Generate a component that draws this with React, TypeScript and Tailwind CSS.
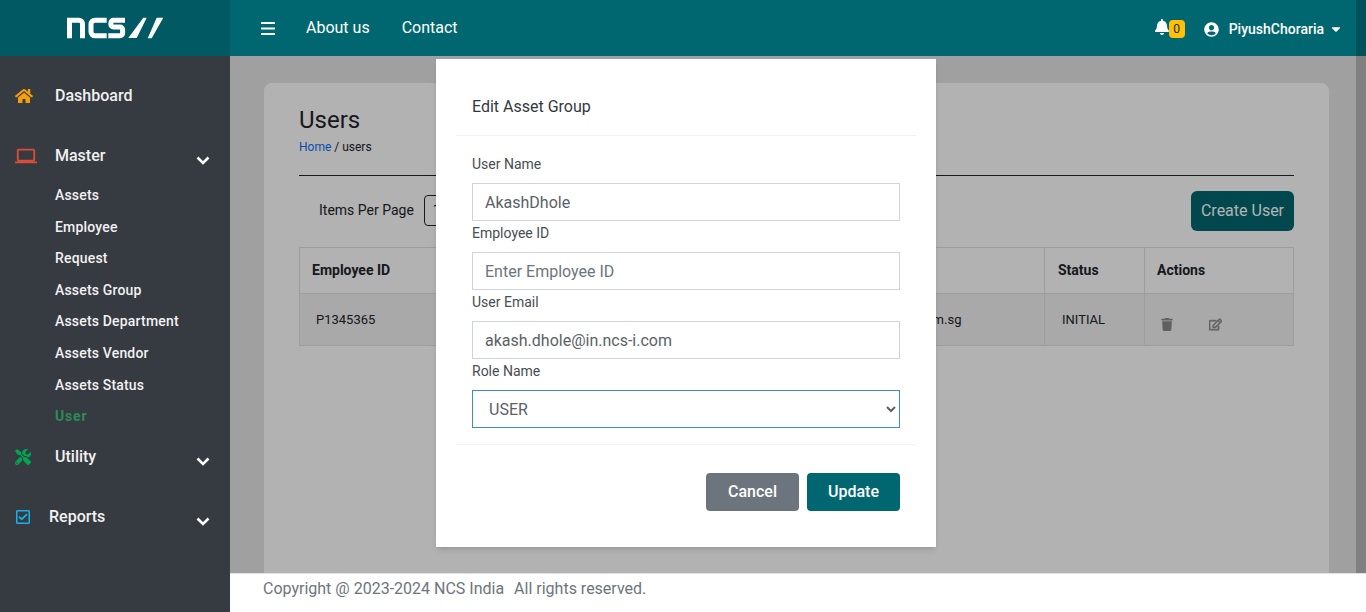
import React from 'react';
import { FaBell, FaCaretDown, FaHome, FaRegCheckSquare, FaRegEdit, FaTools, FaTrash, FaUserCircle } from 'react-icons/fa';
import { MdOutlineLaptop } from 'react-icons/md';

const masterLinks = ['Assets', 'Employee', 'Request', 'Assets Group', 'Assets Department', 'Assets Vendor', 'Assets Status', 'User'];

const Chevron = ({ className = '' }: { className?: string }) => (
  <svg className={className} width="14" height="9" viewBox="0 0 14 9" fill="none" stroke="currentColor" strokeWidth="2.6">
    <path d="M1.5 1.5 7 7l5.5-5.5" />
  </svg>
);

const Logo = () => (
  <svg width="97" height="22" viewBox="0 0 97 22" fill="none" stroke="white" strokeWidth="5">
    <path d="M2.5 21.3V3.2H12a3.5 3.5 0 0 1 3.5 3.5v14.6" />
    <path d="M39.7 3.2H28a4 4 0 0 0-4 4v7.6a4 4 0 0 0 4 4h11.7" />
    <path d="M58 3.2H46.5a2.6 2.6 0 0 0-2.6 2.6v1.6a2.6 2.6 0 0 0 2.6 2.6h6.5a2.6 2.6 0 0 1 2.6 2.6v3.6a2.6 2.6 0 0 1-2.6 2.6H41.3" />
    <path d="M61.3 21h8.4l10-20.3h-3.4zM80.7 21.3h4L96.3.7h-6.6z" fill="white" stroke="none" />
  </svg>
);

const SideItem = ({ icon, label, left = 55, chevron, className = '' }: { icon: React.ReactNode; label: string; left?: number; chevron?: boolean; className?: string }) => (
  <div className={`relative flex h-6 items-center text-base font-medium text-[#f1f1f1] ${className}`}>
    <span className="ml-[15px] flex w-[15px] items-center justify-start">{icon}</span>
    <span className={left === 55 ? 'ml-[25px]' : 'ml-[19px]'}>{label}</span>
    {chevron && <Chevron className="absolute left-[196px] top-[12px] text-white" />}
  </div>
);

const Field = ({ label, value, placeholder }: { label: string; value?: string; placeholder?: string }) => (
  <div>
    <label className="block h-[31px] text-sm leading-6 text-[#484d52]">{label}</label>
    <input
      readOnly
      value={value ?? ''}
      placeholder={placeholder}
      className="block h-[38px] w-full border border-[#ced4da] bg-white px-3 text-base text-[#5a6168] outline-none placeholder:text-[#6c757d]"
    />
  </div>
);

export default function App() {
  return (
    <div className="relative flex h-[612px] flex-col overflow-hidden font-['Roboto',sans-serif]">
      <header className="flex h-14 shrink-0">
        <div className="flex w-[230px] items-center bg-[#005963] pl-[67px]">
          <Logo />
        </div>
        <div className="flex flex-1 items-center bg-[#006670] pl-[31px] pr-[23px] text-white">
          <svg width="14" height="13" viewBox="0 0 14 13" fill="white">
            <path d="M0 0h14v2H0zM0 5.5h14v2H0zM0 11h14v2H0z" />
          </svg>
          <nav className="ml-[31px] flex gap-8 text-base">
            <span>About us</span>
            <span>Contact</span>
          </nav>
          <div className="ml-auto flex items-center pt-[2px]">
            <div className="flex items-center">
              <FaBell className="h-4 w-[14px] shrink-0 -translate-y-[2px]" />
              <span className="flex h-[18px] w-4 items-center justify-center rounded bg-[#ffc107] text-xs text-[#212529]">0</span>
            </div>
            <FaUserCircle className="ml-[19px] h-[15px] w-[15px]" />
            <span className="ml-[10px] text-sm font-medium">PiyushChoraria</span>
            <FaCaretDown className="ml-[5px] h-[14px] w-[14px]" />
          </div>
        </div>
      </header>

      <div className="flex min-h-0 flex-1">
        <aside className="w-[230px] shrink-0 bg-[#363a41] pt-[28px]">
          <SideItem icon={<FaHome className="h-4 w-[18px] shrink-0 text-[#f59e0b]" />} label="Dashboard" />
          <SideItem className="mt-9" icon={<MdOutlineLaptop className="h-[22px] w-[22px] shrink-0 text-[#dd4b39]" />} label="Master" chevron />
          <ul className="mt-[11.2px]">
            {masterLinks.map((link) => (
              <li
                key={link}
                className={`flex h-[31.6px] items-center pl-[55px] text-sm ${link === 'User' ? 'font-bold tracking-[0.8px] text-[#2e8b57]' : 'font-medium tracking-[0.18px] text-[#f1f1f1]'}`}
              >
                {link}
              </li>
            ))}
          </ul>
          <SideItem className="mt-[13px]" icon={<FaTools className="h-4 w-4 shrink-0 text-[#00a651]" />} label="Utility" chevron />
          <SideItem className="mt-9" left={49} icon={<FaRegCheckSquare className="h-4 w-4 shrink-0 text-[#17b3e6]" />} label="Reports" chevron />
        </aside>

        <div className="flex min-w-0 flex-1 flex-col">
          <main className="min-h-0 flex-1 overflow-hidden bg-[#e5e5e5] pl-[34px] pr-[37px] pt-[27px]">
            <section className="h-[520px] rounded-lg bg-white pl-[35px] pr-[35px] pt-[21px]">
              <h1 className="text-2xl text-[#212529]">Users</h1>
              <p className="mt-[2px] text-xs leading-[18px] text-[#212529]">
                <span className="text-[#0d6efd]">Home</span> / users
              </p>
              <hr className="mt-[19px] border-[#212529]" />
              <div className="mt-[15px] flex h-10 items-center justify-between">
                <div className="mb-[2px] flex items-center pl-5 text-sm text-[#212529]">
                  Items Per Page
                  <span className="ml-[10px] flex h-[31px] w-[60px] items-center rounded border border-[#212529] pl-2">10</span>
                </div>
                <button className="h-10 w-[103px] rounded-md bg-[#006670] text-base text-white">Create User</button>
              </div>
              <table className="mt-4 w-full table-fixed border-collapse text-[13px] text-[#212529]">
                <colgroup>
                  <col className="w-[200px]" />
                  <col className="w-[200px]" />
                  <col />
                  <col className="w-[100px]" />
                  <col className="w-[149px]" />
                </colgroup>
                <thead>
                  <tr className="h-[46px] text-left text-sm font-bold">
                    <th className="border border-[#dee2e6] pb-[2px] pl-3">Employee ID</th>
                    <th className="border border-[#dee2e6] pb-[2px] pl-3">User Name</th>
                    <th className="border border-[#dee2e6] pb-[2px] pl-3">User Email</th>
                    <th className="border border-[#dee2e6] pb-[2px] pl-[13px]">Status</th>
                    <th className="border border-[#dee2e6] pb-[2px] pl-3">Actions</th>
                  </tr>
                </thead>
                <tbody>
                  <tr className="h-[52px] bg-[#f2f2f2]">
                    <td className="border border-[#dee2e6] pl-4">P1345365</td>
                    <td className="border border-[#dee2e6] pl-4">AkashDhole</td>
                    <td className="border border-[#dee2e6] pl-[148px]">akash@ncs.com.sg</td>
                    <td className="border border-[#dee2e6] pl-[17px]">INITIAL</td>
                    <td className="border border-[#dee2e6] pl-4">
                      <div className="flex translate-y-[5px] items-center gap-9 text-[#8a8a8a]">
                        <FaTrash className="h-[13px] w-3" />
                        <FaRegEdit className="h-[13px] w-[13px] stroke-current stroke-[24]" />
                      </div>
                    </td>
                  </tr>
                </tbody>
              </table>
            </section>
          </main>
          <footer className="flex h-[39px] shrink-0 items-center border-t border-[#dee2e6] bg-white pb-[9px] pl-[33px] text-base text-[#6c757d]">
            Copyright @ 2023-2024 NCS India
            <span className="ml-[10px]">All rights reserved.</span>
          </footer>
        </div>
      </div>

      {/* modal backdrop only dims the content area, not the nav or footer */}
      <div className="absolute bottom-[39px] left-[230px] right-0 top-14 bg-black/30" />
      <div className="absolute bottom-[39px] right-0 top-0 w-[10px] bg-black/20" />

      <div className="absolute left-[436px] top-[59px] h-[488px] w-[500px] bg-white px-5 shadow-md">
        <div className="flex h-[77px] items-center border-b border-[#f1f1f1] pl-4 pt-[19px] text-base text-[#33383d]">Edit Asset Group</div>
        <form className="border-b border-[#f1f1f1] p-4">
          <Field label="User Name" value="AkashDhole" />
          <Field label="Employee ID" placeholder="Enter Employee ID" />
          <Field label="User Email" value="akash.dhole@in.ncs-i.com" />
          <div>
            <label className="block h-[31px] text-sm leading-6 text-[#484d52]">Role Name</label>
            <select
              defaultValue="USER"
              className="block h-[38px] w-full border border-[#3a8fc0] bg-white px-3 text-base text-[#5a6168] outline-none"
            >
              <option>USER</option>
              <option>ADMIN</option>
            </select>
          </div>
        </form>
        <div className="flex justify-end gap-2 pr-4 pt-[28px]">
          <button className="h-[38px] w-[93px] rounded bg-[#6c757d] text-base font-medium text-white">Cancel</button>
          <button className="h-[38px] w-[93px] rounded bg-[#006670] text-base font-medium text-white">Update</button>
        </div>
      </div>
    </div>
  );
}
